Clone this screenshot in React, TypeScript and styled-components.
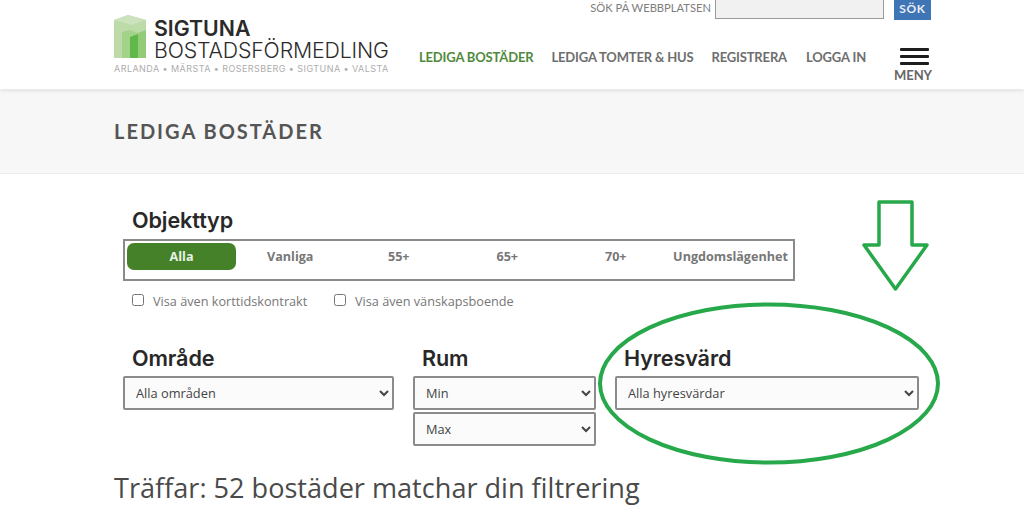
import React from "react";
import styled, { createGlobalStyle } from "styled-components";

const Global = createGlobalStyle`
  html, body { margin: 0; padding: 0; background: #fff; overflow: hidden; }
  body { font-family: "Open Sans", "Liberation Sans", sans-serif; color: #333; }
`;

const Page = styled.div`
  position: relative;
  width: 1024px;
  height: 524px;
  overflow: hidden;
`;

const Header = styled.header`
  height: 89px;
  box-sizing: border-box;
  padding: 0 93px 0 114px;
  display: flex;
  justify-content: space-between;
  background: #fff;
  box-shadow: 0 1px 4px rgba(0, 0, 0, 0.14);
  position: relative;
`;

const Brand = styled.div`
  display: flex;
  flex-direction: column;
  padding-top: 15px;
`;

const BrandTop = styled.div`
  display: flex;
  gap: 8px;
  height: 48px;
`;

const BrandNames = styled.div`
  display: flex;
  flex-direction: column;
  font-family: Inter, "Liberation Sans", sans-serif;
  color: #2b2b2b;
  font-size: 21.3px;
  line-height: 22px;
  padding-top: 2px;
`;

const BrandStrong = styled.span`
  font-weight: 600;
`;

const BrandLight = styled.span`
  font-weight: 300;
  letter-spacing: -0.15px;
`;

const Tagline = styled.div`
  font-family: Inter, "Liberation Sans", sans-serif;
  font-size: 9px;
  line-height: 12px;
  color: #adadad;
  letter-spacing: 0.44px;
  white-space: nowrap;
`;

const HeaderRight = styled.div`
  display: flex;
  flex-direction: column;
  align-items: flex-end;
`;

const SearchRow = styled.div`
  display: flex;
  align-items: flex-start;
  height: 20px;
`;

const SearchLabel = styled.span`
  font-family: Lato, "Liberation Sans", sans-serif;
  font-size: 11.2px;
  line-height: 15px;
  color: #7d7d7d;
  margin-right: 4px;
`;

const SearchInput = styled.div`
  width: 169px;
  height: 19px;
  box-sizing: border-box;
  border: 1px solid #999;
  border-top: none;
  background: #f1f1f1;
  margin-right: 10px;
`;

const SearchButton = styled.div`
  width: 37px;
  height: 20px;
  background: #3f75b5;
  color: #e8eef6;
  font-family: Lato, "Liberation Sans", sans-serif;
  font-weight: 700;
  font-size: 12px;
  letter-spacing: 0.6px;
  line-height: 17px;
  text-align: center;
`;

const NavRow = styled.nav`
  display: flex;
  align-items: flex-start;
  margin-top: 28px;
`;

const NavLink = styled.a<{ $active?: boolean; $gap: number }>`
  font-family: Lato, "Liberation Sans", sans-serif;
  font-weight: 700;
  font-size: 13px;
  line-height: 18px;
  letter-spacing: -0.16px;
  white-space: nowrap;
  color: ${(p) => (p.$active ? "#4f8a3c" : "#6e6e6e")};
  margin-right: ${(p) => p.$gap}px;
`;

const MenuButton = styled.div`
  width: 37px;
  display: flex;
  flex-direction: column;
  align-items: center;
`;

const MenuBar = styled.span`
  display: block;
  width: 29px;
  height: 3px;
  background: #1d1d1d;
  margin: 0 0 4px 4px;
  border-radius: 1px;
`;

const MenuLabel = styled.span`
  font-family: Lato, "Liberation Sans", sans-serif;
  font-weight: 700;
  font-size: 13px;
  line-height: 12px;
  letter-spacing: -0.1px;
  color: #666;
  margin-left: 1px;
`;

const Band = styled.div`
  margin-top: 1px;
  height: 84px;
  box-sizing: border-box;
  background: #f7f7f7;
  border-bottom: 1px solid #ececec;
  padding: 0 0 2px 114px;
  display: flex;
  align-items: center;
`;

const BandTitle = styled.h1`
  margin: 0;
  font-family: Lato, "Liberation Sans", sans-serif;
  font-weight: 700;
  font-size: 20px;
  letter-spacing: 2px;
  color: #555;
`;

const Content = styled.main`
  padding: 34px 0 0 123px;
`;

const FieldTitle = styled.h2<{ $gap: number }>`
  margin: 0 0 ${(p) => p.$gap}px 9px;
  font-family: Inter, "Liberation Sans", sans-serif;
  font-weight: 600;
  font-size: 21.6px;
  line-height: 24px;
  letter-spacing: -0.1px;
  color: #282828;
`;

const Segments = styled.div`
  width: 672px;
  height: 42px;
  box-sizing: border-box;
  border: 2px solid #8a8a8a;
  padding: 2px 2px;
  display: grid;
  grid-template-columns: 109px repeat(4, 108.5px) 1fr;
  align-items: start;
`;

const Segment = styled.div<{ $active?: boolean }>`
  height: 27px;
  border-radius: 7px;
  background: ${(p) => (p.$active ? "#458128" : "transparent")};
  color: ${(p) => (p.$active ? "#e9f1e4" : "#777")};
  font-weight: 700;
  font-size: 12.6px;
  line-height: 27px;
  text-align: center;
  white-space: nowrap;
`;

const Checks = styled.div`
  display: flex;
  margin: 11px 0 0 9px;
  height: 18px;
  align-items: center;
`;

const CheckLabel = styled.label<{ $width: number }>`
  display: flex;
  align-items: center;
  width: ${(p) => p.$width}px;
  font-size: 12.7px;
  color: #777;
  white-space: nowrap;
`;

const CheckBox = styled.input.attrs({ type: "checkbox" })`
  width: 12px;
  height: 12px;
  margin: 0 9px 2px 0;
  flex: none;
`;

const Filters = styled.div`
  display: grid;
  grid-template-columns: 271px 183px 304px;
  column-gap: 19px;
  margin-top: 36px;
  align-items: start;
`;

const Field = styled.div`
  display: flex;
  flex-direction: column;
`;

const Select = styled.select`
  height: 34px;
  width: 100%;
  box-sizing: border-box;
  border: 2px solid #8b8b8b;
  border-radius: 2px;
  padding: 0 5px 0 7px;
  background: #fbfbfb;
  font-family: "Open Sans", "Liberation Sans", sans-serif;
  font-size: 12.8px;
  color: #444;
  margin-bottom: 2px;
`;

const Result = styled.h3`
  margin: 21px 0 0 -9px;
  font-weight: 400;
  font-size: 27.1px;
  line-height: 38px;
  color: #4a4a4a;
  white-space: nowrap;
`;

const Annotation = styled.svg`
  position: absolute;
  left: 0;
  top: 0;
  pointer-events: none;
`;

export default function App() {
  return (
    <Page>
      <Global />
      <Header>
        <Brand>
          <BrandTop>
            <svg width="32" height="43" viewBox="0 0 32 43" style={{ flex: "none" }}>
              <path d="M0 5 L14 0 L32 5 L32 43 L0 43 Z" fill="#bcdba9" />
              <path d="M0 5 L14 0 L32 5 L18 10 Z" fill="#cbe2bc" />
              <path d="M8 17 L16 15 L24 18 L24 43 L8 43 Z" fill="#a3d28a" />
              <path d="M16 22 L24 19 L24 43 L16 43 Z" fill="#5fb84a" />
              <path d="M24 18 L32 15 L32 43 L24 43 Z" fill="#93cb78" />
            </svg>
            <BrandNames>
              <BrandStrong>SIGTUNA</BrandStrong>
              <BrandLight>BOSTADSFÖRMEDLING</BrandLight>
            </BrandNames>
          </BrandTop>
          <Tagline>ARLANDA • MÄRSTA • ROSERSBERG • SIGTUNA • VALSTA</Tagline>
        </Brand>
        <HeaderRight>
          <SearchRow>
            <SearchLabel>SÖK PÅ WEBBPLATSEN</SearchLabel>
            <SearchInput />
            <SearchButton>SÖK</SearchButton>
          </SearchRow>
          <NavRow>
            <NavLink $active $gap={18}>LEDIGA BOSTÄDER</NavLink>
            <NavLink $gap={18}>LEDIGA TOMTER &amp; HUS</NavLink>
            <NavLink $gap={19}>REGISTRERA</NavLink>
            <NavLink $gap={28}>LOGGA IN</NavLink>
            <MenuButton>
              <MenuBar />
              <MenuBar />
              <MenuBar />
              <MenuLabel>MENY</MenuLabel>
            </MenuButton>
          </NavRow>
        </HeaderRight>
      </Header>
      <Band>
        <BandTitle>LEDIGA BOSTÄDER</BandTitle>
      </Band>
      <Content>
        <FieldTitle $gap={7}>Objekttyp</FieldTitle>
        <Segments>
          <Segment $active>Alla</Segment>
          <Segment>Vanliga</Segment>
          <Segment>55+</Segment>
          <Segment>65+</Segment>
          <Segment>70+</Segment>
          <Segment>Ungdomslägenhet</Segment>
        </Segments>
        <Checks>
          <CheckLabel $width={202}><CheckBox />Visa även korttidskontrakt</CheckLabel>
          <CheckLabel $width={200}><CheckBox />Visa även vänskapsboende</CheckLabel>
        </Checks>
        <Filters>
          <Field>
            <FieldTitle $gap={6}>Område</FieldTitle>
            <Select><option>Alla områden</option></Select>
          </Field>
          <Field>
            <FieldTitle $gap={6}>Rum</FieldTitle>
            <Select><option>Min</option></Select>
            <Select><option>Max</option></Select>
          </Field>
          <Field>
            <FieldTitle $gap={6}>Hyresvärd</FieldTitle>
            <Select><option>Alla hyresvärdar</option></Select>
          </Field>
        </Filters>
        <Result>Träffar: 52 bostäder matchar din filtrering</Result>
      </Content>
      <Annotation width="1024" height="524" viewBox="0 0 1024 524">
        <path d="M879 202 L912 202 L912 245 L927 245 L895.500 289 L864 245 L879 245 Z" fill="none" stroke="#27a84a" strokeWidth="3.500" strokeLinejoin="round" />
        <ellipse cx="769" cy="383.500" rx="169" ry="79" fill="none" stroke="#27a84a" strokeWidth="4" />
      </Annotation>
    </Page>
  );
}
